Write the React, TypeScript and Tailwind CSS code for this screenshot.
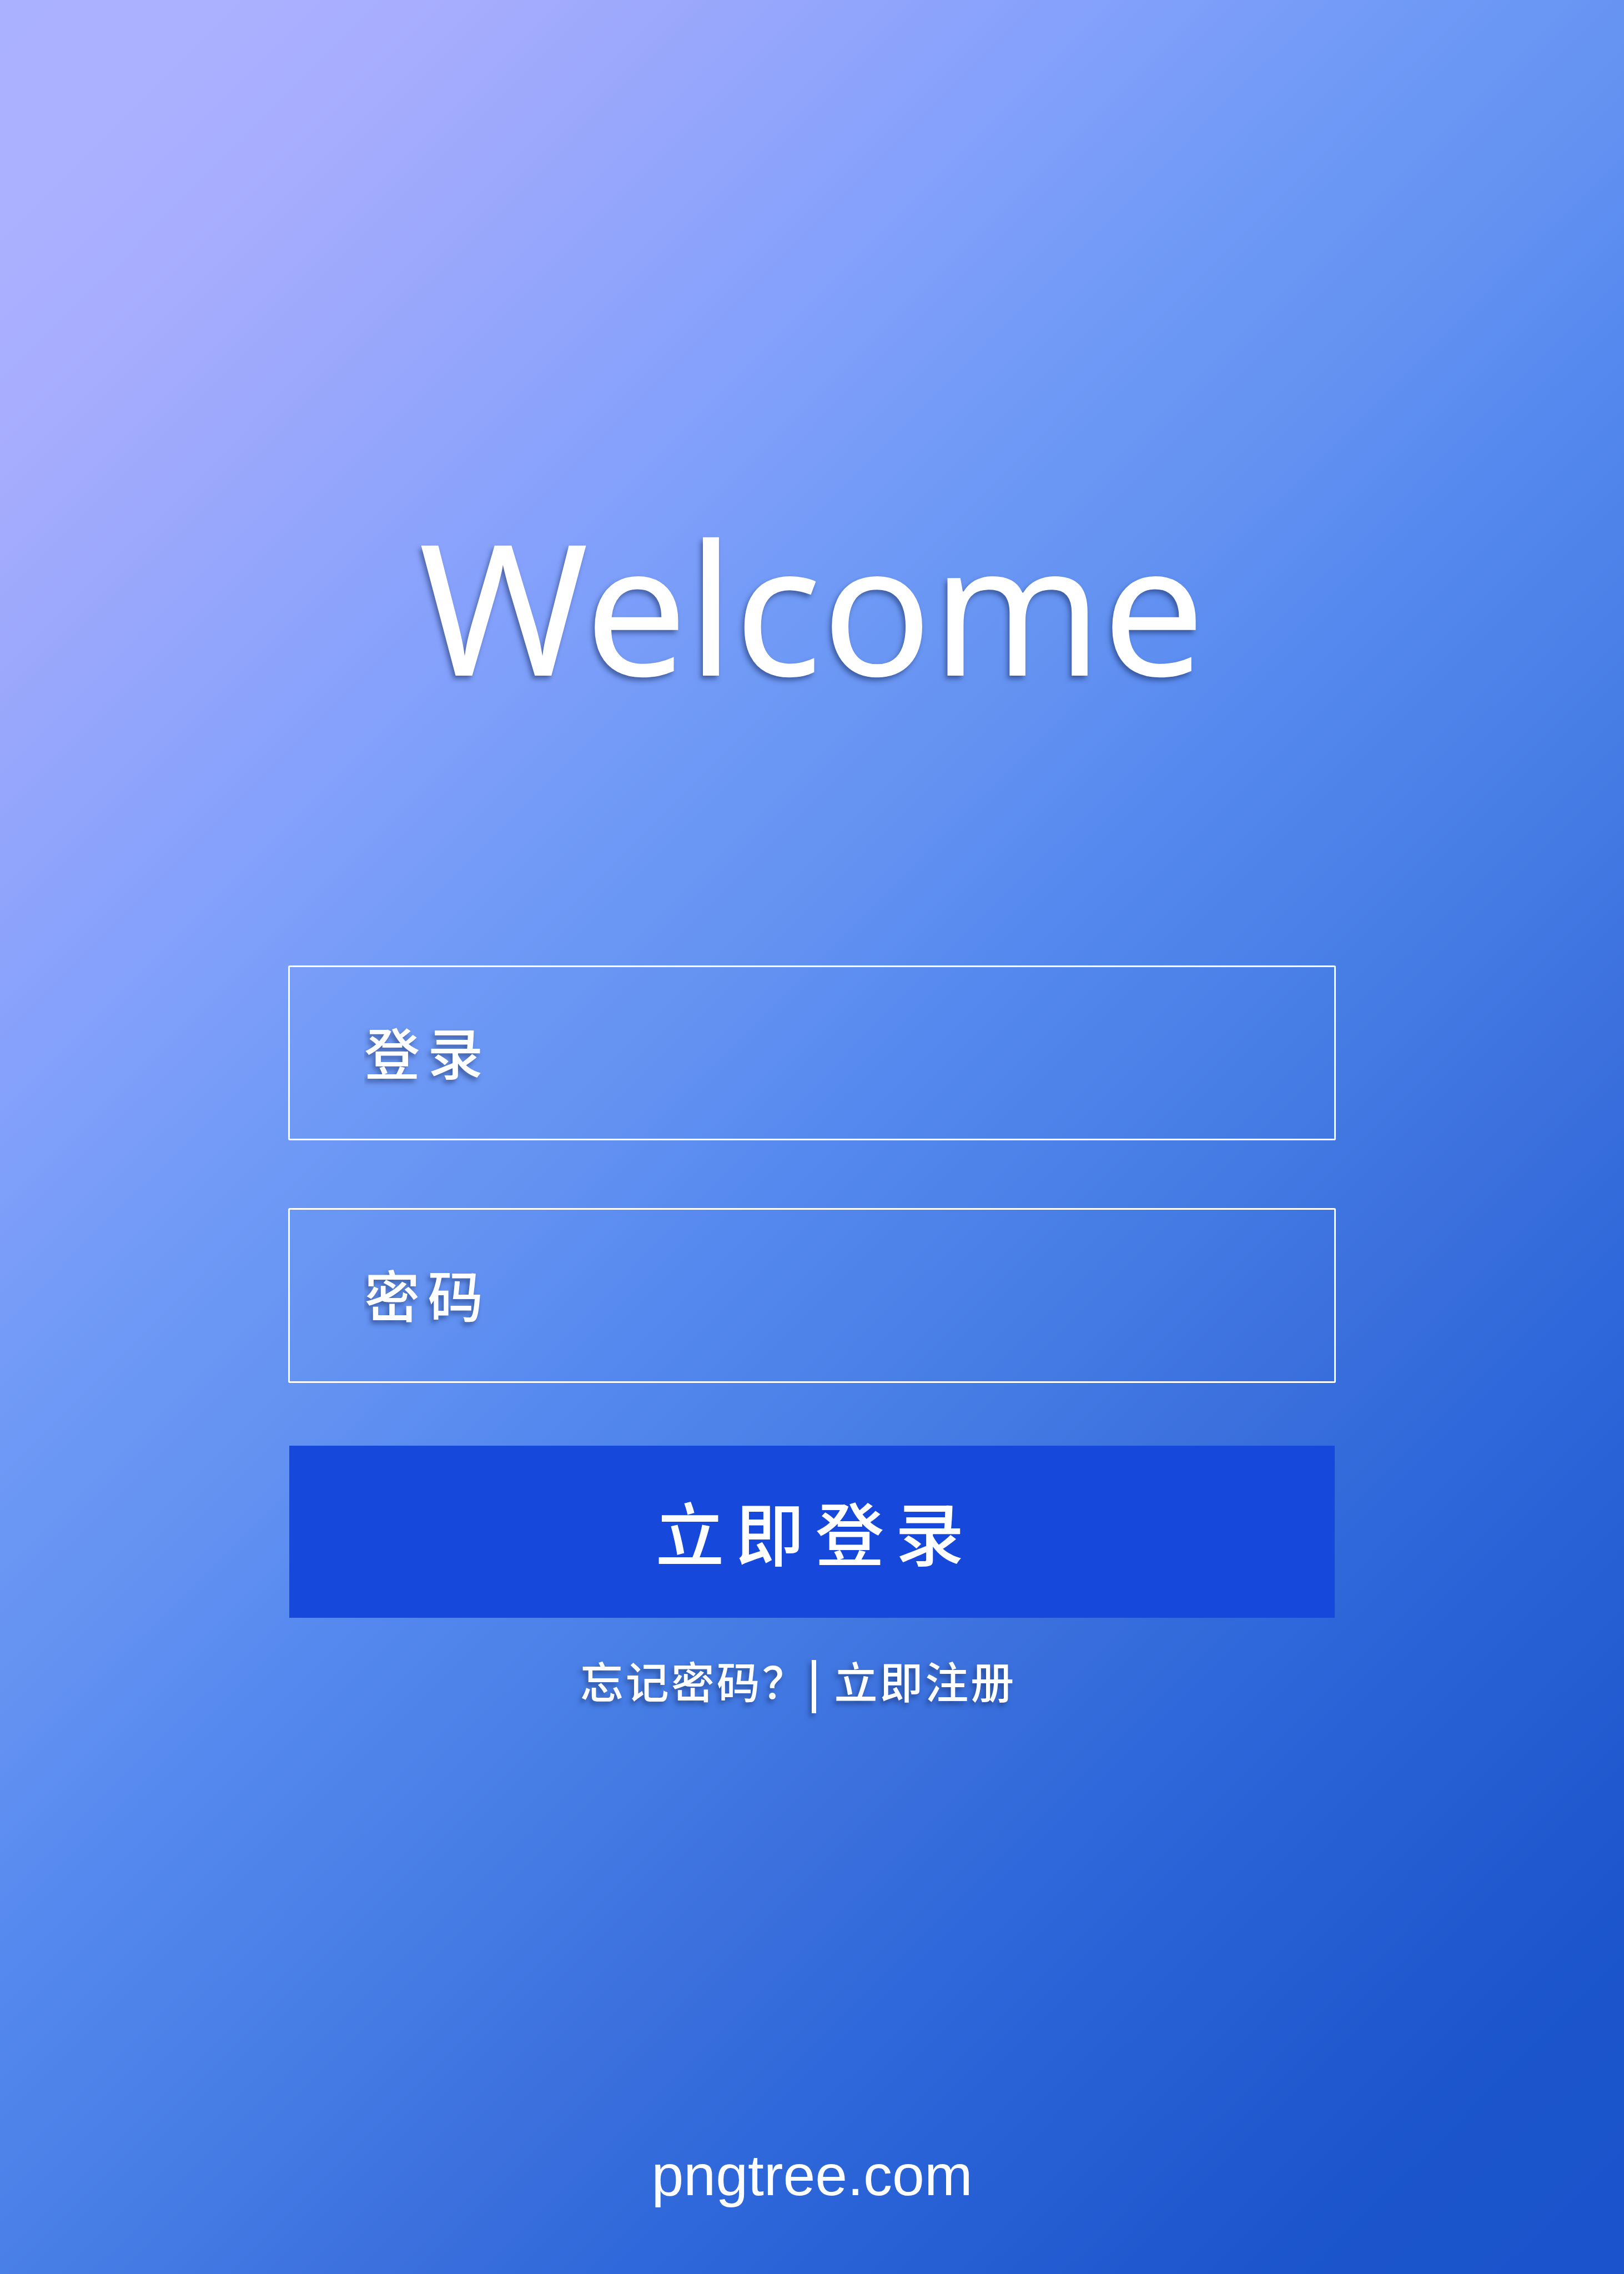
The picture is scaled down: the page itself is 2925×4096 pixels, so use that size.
const textShadow = "[text-shadow:-4px_6px_8px_rgba(20,40,90,0.5)]";

function Field({ id, type, label }: { id: string; type: string; label: string }) {
  return (
    <input
      id={id}
      name={id}
      type={type}
      aria-label={label}
      placeholder={label}
      className={`h-[315px] w-full rounded-[3px] border-3 border-white bg-transparent px-[134px] text-[100px] font-medium tracking-[14px] text-white outline-none placeholder:text-white placeholder:opacity-100 ${textShadow}`}
    />
  );
}

export default function App() {
  return (
    <div className="flex min-h-screen flex-col items-center bg-[linear-gradient(135deg,#aab1fe_0%,#aab0fe_7%,#a8adfe_11%,#96a6fb_20%,#82a0fb_29%,#709af6_36%,#6593f2_43%,#5488ee_51%,#467de5_60%,#3b70dd_68%,#2c66d9_76%,#255dd3_83%,#1b55cb_92%,#1a53cb_100%)] font-['Noto_Sans','Noto_Sans_CJK_SC',sans-serif] text-white">
      <h1 className={`mt-[890px] text-[328px] leading-[400px] font-normal ${textShadow}`}>Welcome</h1>

      <form className="mt-[449px] w-[64.5%]" onSubmit={(e) => e.preventDefault()}>
        <div className="flex flex-col gap-[122px]">
          <Field id="account" type="text" label="登录" />
          <Field id="password" type="password" label="密码" />
        </div>
        <div className="mt-[113px] px-0.5">
          <button
            type="submit"
            className="h-[310px] w-full bg-[#1648dc] pt-2 pl-3 text-[124px] font-medium tracking-[20px] text-white"
          >
            立即登录
          </button>
        </div>
        <nav className="mt-[68px] flex items-start justify-center pr-[50px] text-[78px] leading-[96px] font-medium tracking-wider">
          <a href="#forgot" className={textShadow}>
            忘记密码？
          </a>
          <span className="mt-2 ml-2 h-24 w-2 bg-white shadow-[-4px_6px_8px_rgba(20,40,90,0.5)]" />
          <a href="#register" className={`ml-8 ${textShadow}`}>
            立即注册
          </a>
        </nav>
      </form>

      <footer className="mt-auto pb-[118px]">
        <a href="#home" className="block font-['Liberation_Sans',sans-serif] text-[104px] leading-[120px]">
          pngtree.com
        </a>
      </footer>
    </div>
  );
}
